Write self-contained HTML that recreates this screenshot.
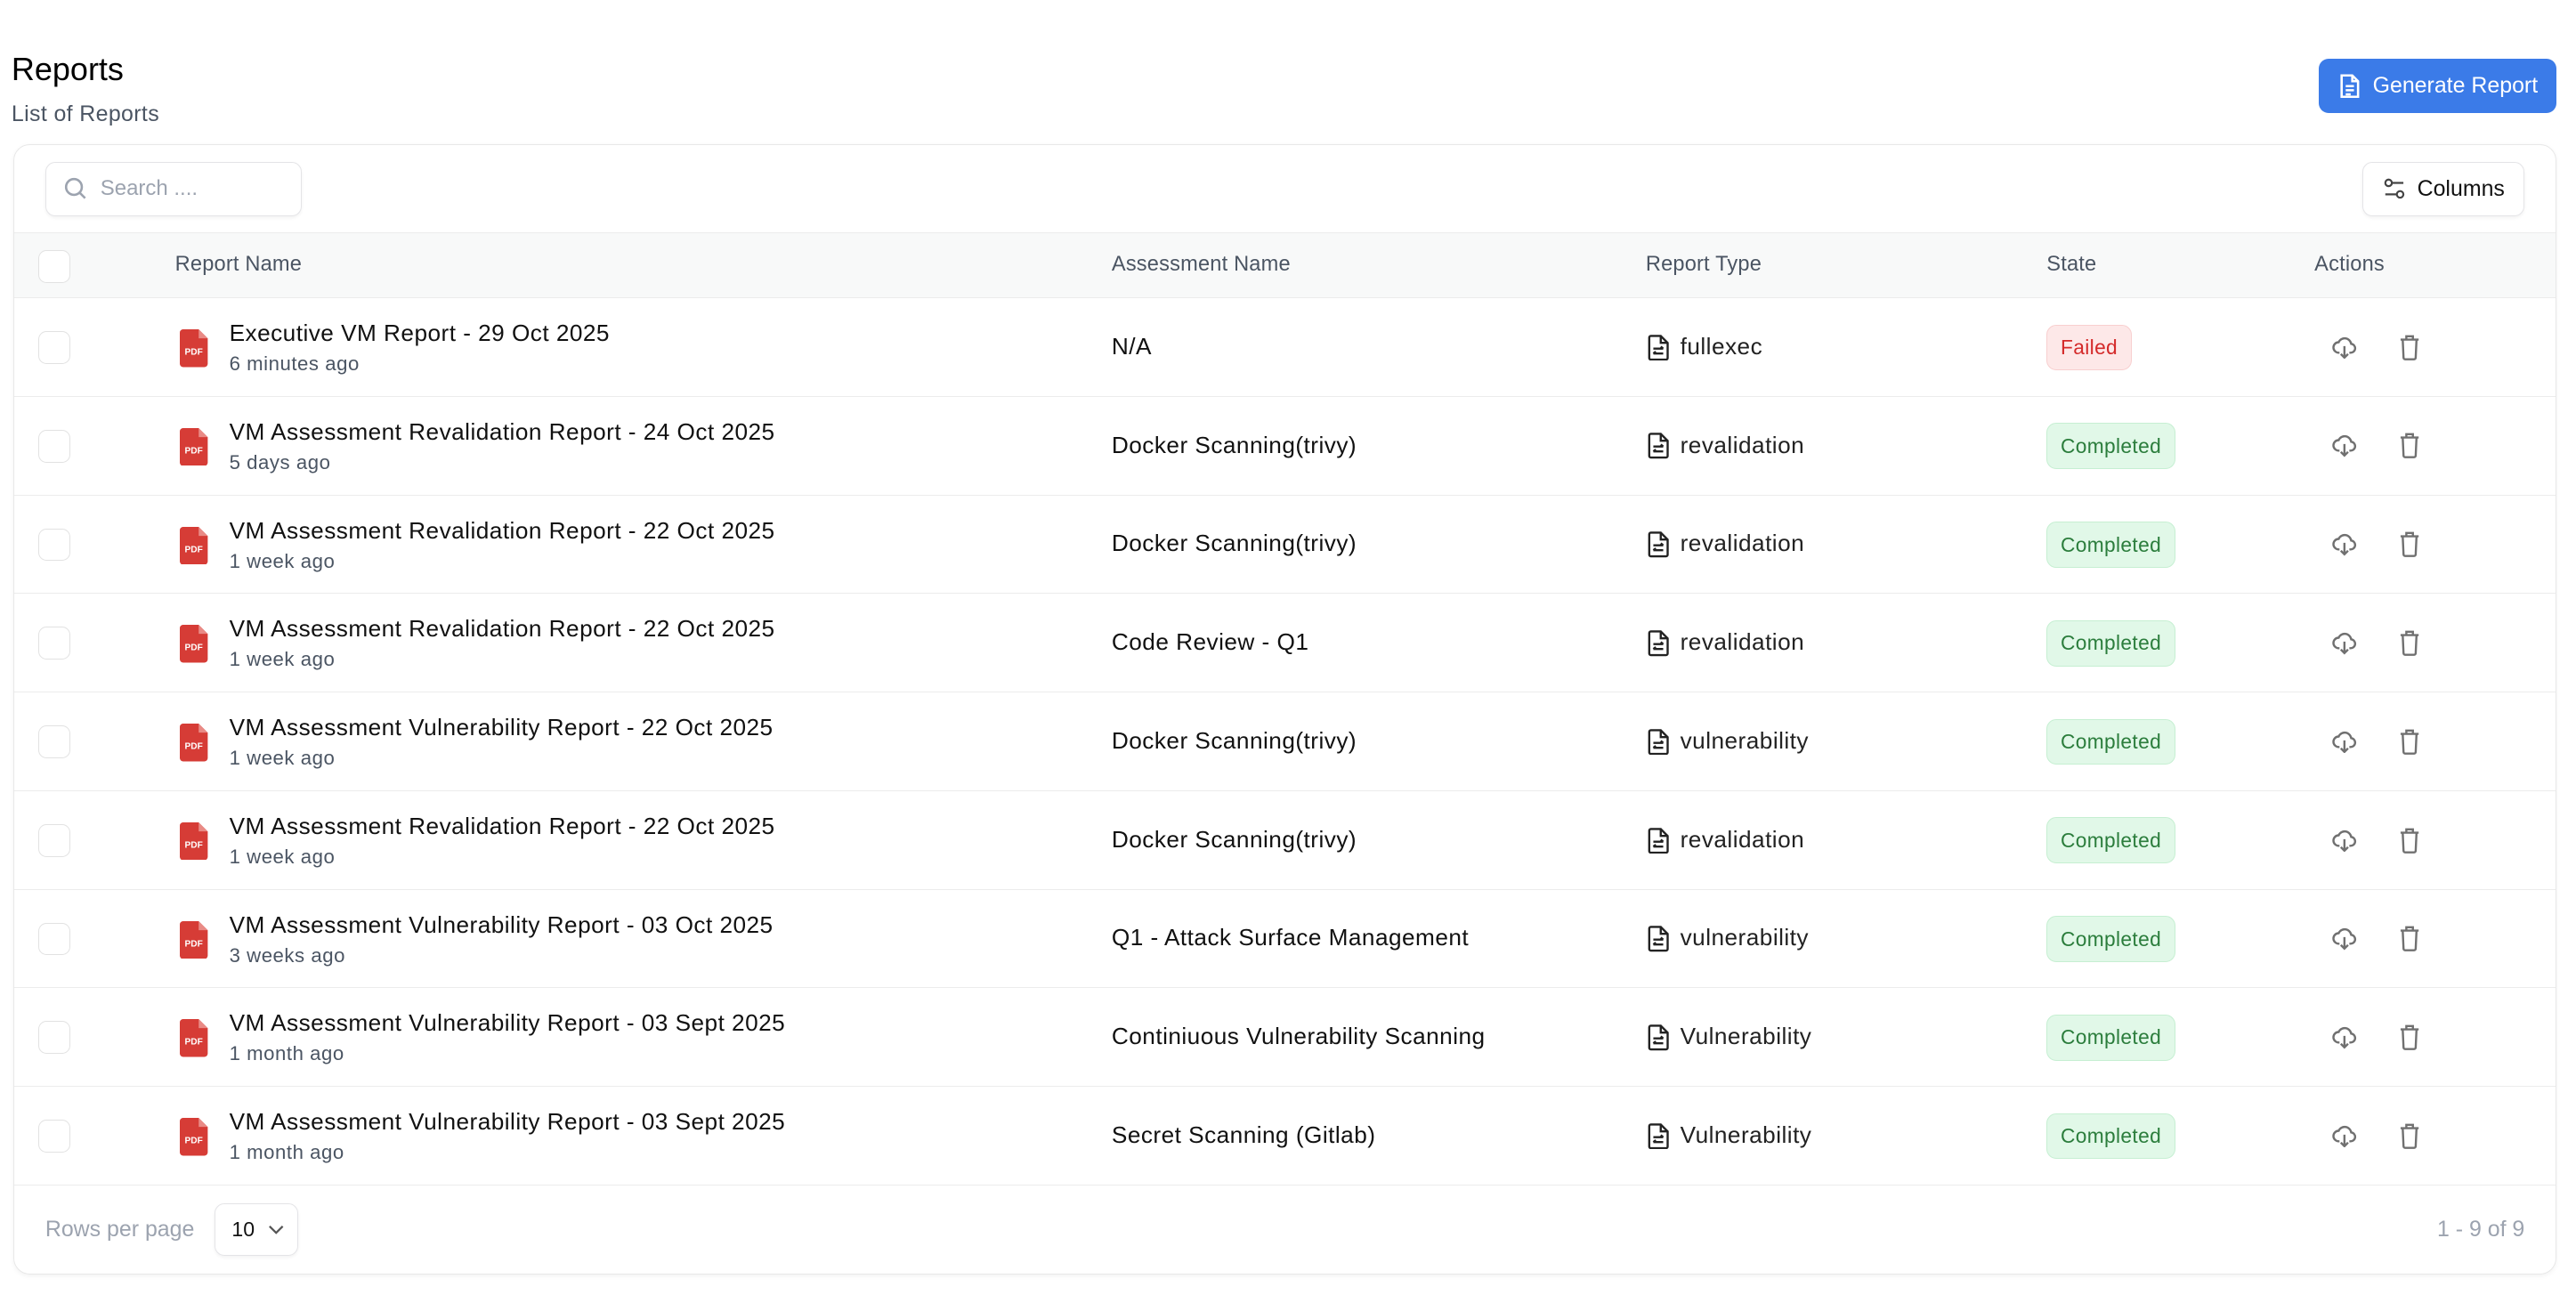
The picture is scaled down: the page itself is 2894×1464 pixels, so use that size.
<!DOCTYPE html>
<html><head><meta charset="utf-8"><style>
*{box-sizing:border-box;margin:0;padding:0}
html,body{width:2894px;height:1464px;overflow:hidden;background:#fff}
#w{zoom:1.846;width:1568px;height:793px;position:relative;font-family:"Liberation Sans",sans-serif;color:#111}
.abs{position:absolute}
h1{position:absolute;left:7px;top:31px;font-size:19.5px;font-weight:400;color:#000}
.sub{position:absolute;left:7px;top:62px;font-size:13.5px;color:#4b5563;letter-spacing:.2px}
.gen{position:absolute;left:1411px;top:36px;width:145px;height:33px;background:#3b7be8;border-radius:6px;color:#fff;font-size:13.5px;display:flex;align-items:center;padding-left:12px;gap:7px}
.card{position:absolute;left:8px;top:88px;width:1548px;height:688px;border:1px solid #e8e8e8;border-radius:10px;box-shadow:0 1px 3px rgba(0,0,0,.05);overflow:hidden}
.search{position:absolute;left:19px;top:10px;width:156px;height:33px;border:1px solid #e4e4e7;border-radius:6px;box-shadow:0 1px 2px rgba(0,0,0,.05);display:flex;align-items:center;padding-left:11px;gap:8px;color:#9ca3af;font-size:13px}
.cols{position:absolute;left:1429px;top:10px;width:99px;height:33px;border:1px solid #e4e4e7;border-radius:6px;box-shadow:0 1px 2px rgba(0,0,0,.05);display:flex;align-items:center;padding-left:12px;gap:7px;font-size:13.5px;color:#111}
.head{position:absolute;left:0;top:53px;width:100%;height:40px;background:#f8f9f9;border-top:1px solid #ececec;border-bottom:1px solid #ececec;font-size:12.8px;color:#4b5563;letter-spacing:.1px}
.cb{position:absolute;left:15px;width:19px;height:20px;border:1px solid #e2e2e2;border-radius:5px;background:#fff}
.row{position:absolute;left:0;width:100%;height:60px;border-bottom:1px solid #ececec}
.t{position:absolute;font-size:14.2px;color:#111;white-space:nowrap;letter-spacing:.25px}
.s{position:absolute;font-size:12px;color:#4b5563;white-space:nowrap;letter-spacing:.3px}
.badge{position:absolute;left:1237px;top:16px;height:28px;border-radius:6px;font-size:12.3px;display:flex;align-items:center;padding:0 8px;letter-spacing:.2px}
.ok{background:#e1f8e8;border:1px solid #c6efd2;color:#2b7d3c}
.bad{background:#fde8e8;border:1px solid #f8cfcf;color:#d42a2a}
.foot{position:absolute;left:0;top:633px;width:100%;height:55px}
</style></head><body><div id="w">
<h1>Reports</h1>
<div class="sub">List of Reports</div>
<div class="gen"><svg width="14" height="16" viewBox="0 0 14 16" fill="none" stroke="#fff" stroke-width="1.4"><path d="M2 1.5h6.5l3.5 3.5v9.5H2z"/><path d="M8.5 1.5V5H12"/><path d="M4.5 8h5M4.5 10.5h5M4.5 13h3"/></svg>Generate Report</div>
<div class="card">
<div class="search"><svg width="14" height="14" viewBox="0 0 14 14" fill="none" stroke="#9ca3af" stroke-width="1.4"><circle cx="6" cy="6" r="4.8"/><path d="M9.5 9.5l3.3 3.3"/></svg>Search ....</div>
<div class="cols"><svg width="14" height="14" viewBox="0 0 14 14" fill="none" stroke="#444" stroke-width="1.2"><circle cx="3.5" cy="3.5" r="2"/><path d="M5.5 3.5h7"/><circle cx="10.5" cy="10.5" r="2"/><path d="M1.5 10.5h7"/></svg>Columns</div>
<div class="head">
<div class="cb" style="top:10px"></div>
<div class="abs" style="left:98px;top:12px">Report Name</div>
<div class="abs" style="left:668px;top:12px">Assessment Name</div>
<div class="abs" style="left:993px;top:12px">Report Type</div>
<div class="abs" style="left:1237px;top:12px">State</div>
<div class="abs" style="left:1400px;top:12px">Actions</div>
</div>
<div id="rows"></div>
<div class="foot">
<div class="abs" style="left:19px;top:19px;font-size:13.5px;color:#9ca3af">Rows per page</div>
<div class="abs" style="left:122px;top:11px;width:51px;height:32px;border:1px solid #e4e4e7;border-radius:6px;box-shadow:0 1px 2px rgba(0,0,0,.05);font-size:12.5px;display:flex;align-items:center;padding-left:10px;gap:8px;color:#111">10<svg width="10" height="6" viewBox="0 0 10 6" fill="none" stroke="#555" stroke-width="1.2"><path d="M1 1l4 4 4-4"/></svg></div>
<div class="abs" style="right:19px;top:19px;font-size:13.5px;color:#9ca3af">1 - 9 of 9</div>
</div>
</div>
</div>
<script>
var d=[["Executive VM Report - 29 Oct 2025","6 minutes ago","N/A","fullexec",0],
["VM Assessment Revalidation Report - 24 Oct 2025","5 days ago","Docker Scanning(trivy)","revalidation",1],
["VM Assessment Revalidation Report - 22 Oct 2025","1 week ago","Docker Scanning(trivy)","revalidation",1],
["VM Assessment Revalidation Report - 22 Oct 2025","1 week ago","Code Review - Q1","revalidation",1],
["VM Assessment Vulnerability Report - 22 Oct 2025","1 week ago","Docker Scanning(trivy)","vulnerability",1],
["VM Assessment Revalidation Report - 22 Oct 2025","1 week ago","Docker Scanning(trivy)","revalidation",1],
["VM Assessment Vulnerability Report - 03 Oct 2025","3 weeks ago","Q1 - Attack Surface Management","vulnerability",1],
["VM Assessment Vulnerability Report - 03 Sept 2025","1 month ago","Continiuous Vulnerability Scanning","Vulnerability",1],
["VM Assessment Vulnerability Report - 03 Sept 2025","1 month ago","Secret Scanning (Gitlab)","Vulnerability",1]];
var pdf='<svg class="abs" style="left:101px;top:19px" width="17" height="23" viewBox="0 0 17 23"><path d="M2 0h9.5L17 5.5V21a2 2 0 0 1-2 2H2a2 2 0 0 1-2-2V2a2 2 0 0 1 2-2z" fill="#d63c36"/><path d="M11.5 0V5.5H17z" fill="#e98a85"/><text x="8.5" y="15.5" font-size="5.5" font-weight="700" fill="#fff" text-anchor="middle" font-family="Liberation Sans">PDF</text></svg>';
var doc='<svg class="abs" style="left:994px;top:22px" width="13" height="16" viewBox="0 0 13 16" fill="none" stroke="#222" stroke-width="1.3"><path d="M2 .8h6l4.2 4.2v9.2a1 1 0 0 1-1 1H2a1 1 0 0 1-1-1V1.8a1 1 0 0 1 1-1z"/><path d="M8 .8V5h4.2"/><path d="M3.5 8.5h6M8 7.3l1.5 1.2M3.5 11.5h6M5 10.3l-1.5 1.2"/></svg>';
var act='<svg class="abs" style="left:1411px;top:22px" width="15" height="15" viewBox="0 0 15 15" fill="none" stroke="#707070" stroke-width="1.3"><path d="M4.5 11H4A3.2 3.2 0 0 1 4 4.6a4 4 0 0 1 7.6 1A2.7 2.7 0 0 1 11 11h-.5"/><path d="M7.5 7v7M5.3 11.8l2.2 2.2 2.2-2.2"/></svg><svg class="abs" style="left:1452px;top:22px" width="12" height="16" viewBox="0 0 12 16" fill="none" stroke="#707070" stroke-width="1.3"><path d="M.5 3h11M4 3V1h4v2M1.8 3l.5 11a1 1 0 0 0 1 1h5.4a1 1 0 0 0 1-1l.5-11"/></svg>';
var h='';
d.forEach(function(r,i){var top=93+i*60;
h+='<div class="row" style="top:'+top+'px"><div class="cb" style="top:20px"></div>'+pdf+
'<div class="t" style="left:131px;top:13px">'+r[0]+'</div><div class="s" style="left:131px;top:33px">'+r[1]+'</div>'+
'<div class="t" style="left:668px;top:21px">'+r[2]+'</div>'+doc+
'<div class="t" style="left:1014px;top:21px;color:#222">'+r[3]+'</div>'+
(r[4]?'<div class="badge ok">Completed</div>':'<div class="badge bad">Failed</div>')+act+'</div>';});
document.getElementById('rows').innerHTML=h;
</script>
</body></html>
